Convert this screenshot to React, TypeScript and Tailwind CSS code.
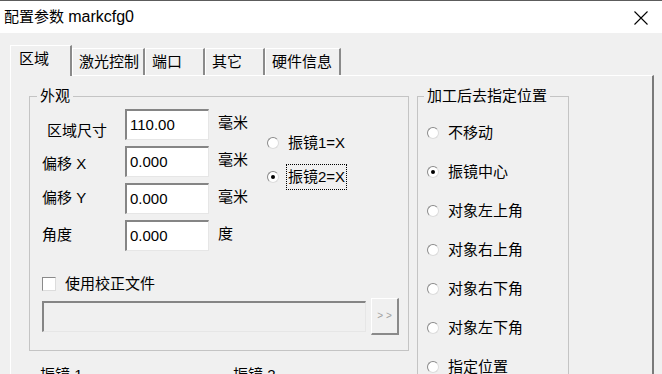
import React from 'react';

const Radio: React.FC<{ checked?: boolean }> = ({ checked }) => (
  <span className="w-[12px] h-[12px] shrink-0 rounded-full bg-white border border-t-[#8a8a8a] border-l-[#8a8a8a] border-b-[#dcdcdc] border-r-[#dcdcdc] flex items-center justify-center">
    {checked && <span className="w-[4px] h-[4px] rounded-full bg-black" />}
  </span>
);

const Field: React.FC<{ value: string }> = ({ value }) => (
  <div className="w-[84px] h-[31px] bg-white border-t-2 border-l-2 border-b border-r border-t-[#858585] border-l-[#858585] border-b-[#e6e6e6] border-r-[#e6e6e6] pl-[3px] pt-[4px] leading-[20px]">
    {value}
  </div>
);

const rows = [
  { label: '区域尺寸', value: '110.00', unit: '毫米', indent: 'pl-[5px]', pt: 'pt-[12px]' },
  { label: '偏移 X', value: '0.000', unit: '毫米', indent: '', pt: 'pt-[8px]' },
  { label: '偏移 Y', value: '0.000', unit: '毫米', indent: '', pt: 'pt-[5px]' },
  { label: '角度', value: '0.000', unit: '度', indent: '', pt: 'pt-[5px]' },
];

const targets = ['不移动', '振镜中心', '对象左上角', '对象右上角', '对象右下角', '对象左下角', '指定位置'];

const tabs = [
  { name: '激光控制', w: 'w-[73px]' },
  { name: '端口', w: 'w-[60px]' },
  { name: '其它', w: 'w-[60px]' },
  { name: '硬件信息', w: 'w-[76px]' },
];

const App: React.FC = () => {
  return (
    <div className="w-[662px] h-[374px] overflow-hidden bg-[#f0f0f0] text-black text-[15px] font-['Liberation_Sans','Noto_Sans_CJK_SC',sans-serif]">
      {/* title bar */}
      <div className="h-[33px] bg-white border-t border-[#5c5c5c] flex items-center justify-between pl-[4px] pr-[14px]">
        <span className="text-[15px] leading-[20px]">
          配置参数 <span className="text-[16px]">markcfg0</span>
        </span>
        <svg width="14" height="14" viewBox="0 0 14 14" className="mt-[1px]">
          <path d="M0.5 0.5 L13.5 13.5 M13.5 0.5 L0.5 13.5" stroke="#000" strokeWidth="1.1" fill="none" />
        </svg>
      </div>

      {/* tabs */}
      <div className="h-[42px] pl-[10px] pt-[12px] flex items-end">
        <div className="relative z-10 w-[62px] h-[31px] -mb-px bg-[#f0f0f0] border-t border-l border-white border-r-2 border-r-[#8a8a8a] pl-[8px] pb-[4px] flex items-center leading-[20px]">
          区域
        </div>
        {tabs.map((t) => (
          <div
            key={t.name}
            className={`${t.w} h-[27px] border-t border-l border-white border-r-2 border-r-[#8a8a8a] pl-[6px] flex items-center leading-[20px]`}
          >
            {t.name}
          </div>
        ))}
      </div>

      {/* panel */}
      <div className="ml-[10px] w-[644px] h-[320px] border-t border-l border-white border-r-2 border-r-[#7a7a7a] pl-[18px] pt-[10px] flex gap-[8px]">
        <div className="flex flex-col">
          <fieldset className="w-[380px] border border-[#c4c4c4] pl-[12px] pb-[15px]">
            <legend className="ml-[-5px] px-[3px] leading-[20px]">外观</legend>
            <div className="flex mt-[3px]">
              <div className="w-[225px] flex flex-col gap-[6px]">
                {rows.map((r) => (
                  <div key={r.label} className="flex h-[31px] leading-[20px]">
                    <div className={`w-[83px] ${r.indent} ${r.pt}`}>{r.label}</div>
                    <Field value={r.value} />
                    <div className="ml-[9px] pt-[4px]">{r.unit}</div>
                  </div>
                ))}
              </div>
              <div className="flex flex-col gap-[8px] pt-[21px]">
                <div className="h-[26px] flex items-center leading-[20px]">
                  <Radio />
                  <span className="ml-[8px] px-[1px]">振镜1=X</span>
                </div>
                <div className="h-[26px] flex items-center leading-[20px]">
                  <Radio checked />
                  <span className="ml-[7px] px-[1px] h-[26px] flex items-center border border-dotted border-black">振镜2=X</span>
                </div>
              </div>
            </div>
            <div className="mt-[23px] h-[20px] flex items-center leading-[20px]">
              <span className="w-[14px] h-[14px] bg-white border border-t-[#8a8a8a] border-l-[#8a8a8a] border-b-[#dcdcdc] border-r-[#dcdcdc]" />
              <span className="ml-[9px]">使用校正文件</span>
            </div>
            <div className="mt-[4px] flex items-center">
              <div className="w-[324px] h-[31px] bg-[#f0f0f0] border-t-2 border-l-2 border-b border-r border-t-[#858585] border-l-[#858585] border-b-[#e6e6e6] border-r-[#e6e6e6]" />
              <div className="ml-[5px] w-[28px] h-[37px] border-t border-l border-white border-b-2 border-r-2 border-b-[#8a8a8a] border-r-[#8a8a8a] flex items-center justify-center text-[10px] text-[#a0a0a0] leading-none">
                &gt; &gt;
              </div>
            </div>
          </fieldset>
          <div className="mt-[14px] pl-[11px] flex leading-[20px]">
            <span className="w-[193px]">振镜 1</span>
            <span>振镜 2</span>
          </div>
        </div>

        <fieldset className="w-[152px] h-[300px] border border-[#c4c4c4] pl-[9px] pt-[7px]">
          <legend className="ml-[-3px] px-[3px] leading-[20px]">加工后去指定位置</legend>
          {targets.map((t, i) => (
            <div key={t} className="h-[39px] flex items-center leading-[20px]">
              <Radio checked={i === 1} />
              <span className="ml-[9px]">{t}</span>
            </div>
          ))}
        </fieldset>
      </div>
    </div>
  );
};

export default App;
